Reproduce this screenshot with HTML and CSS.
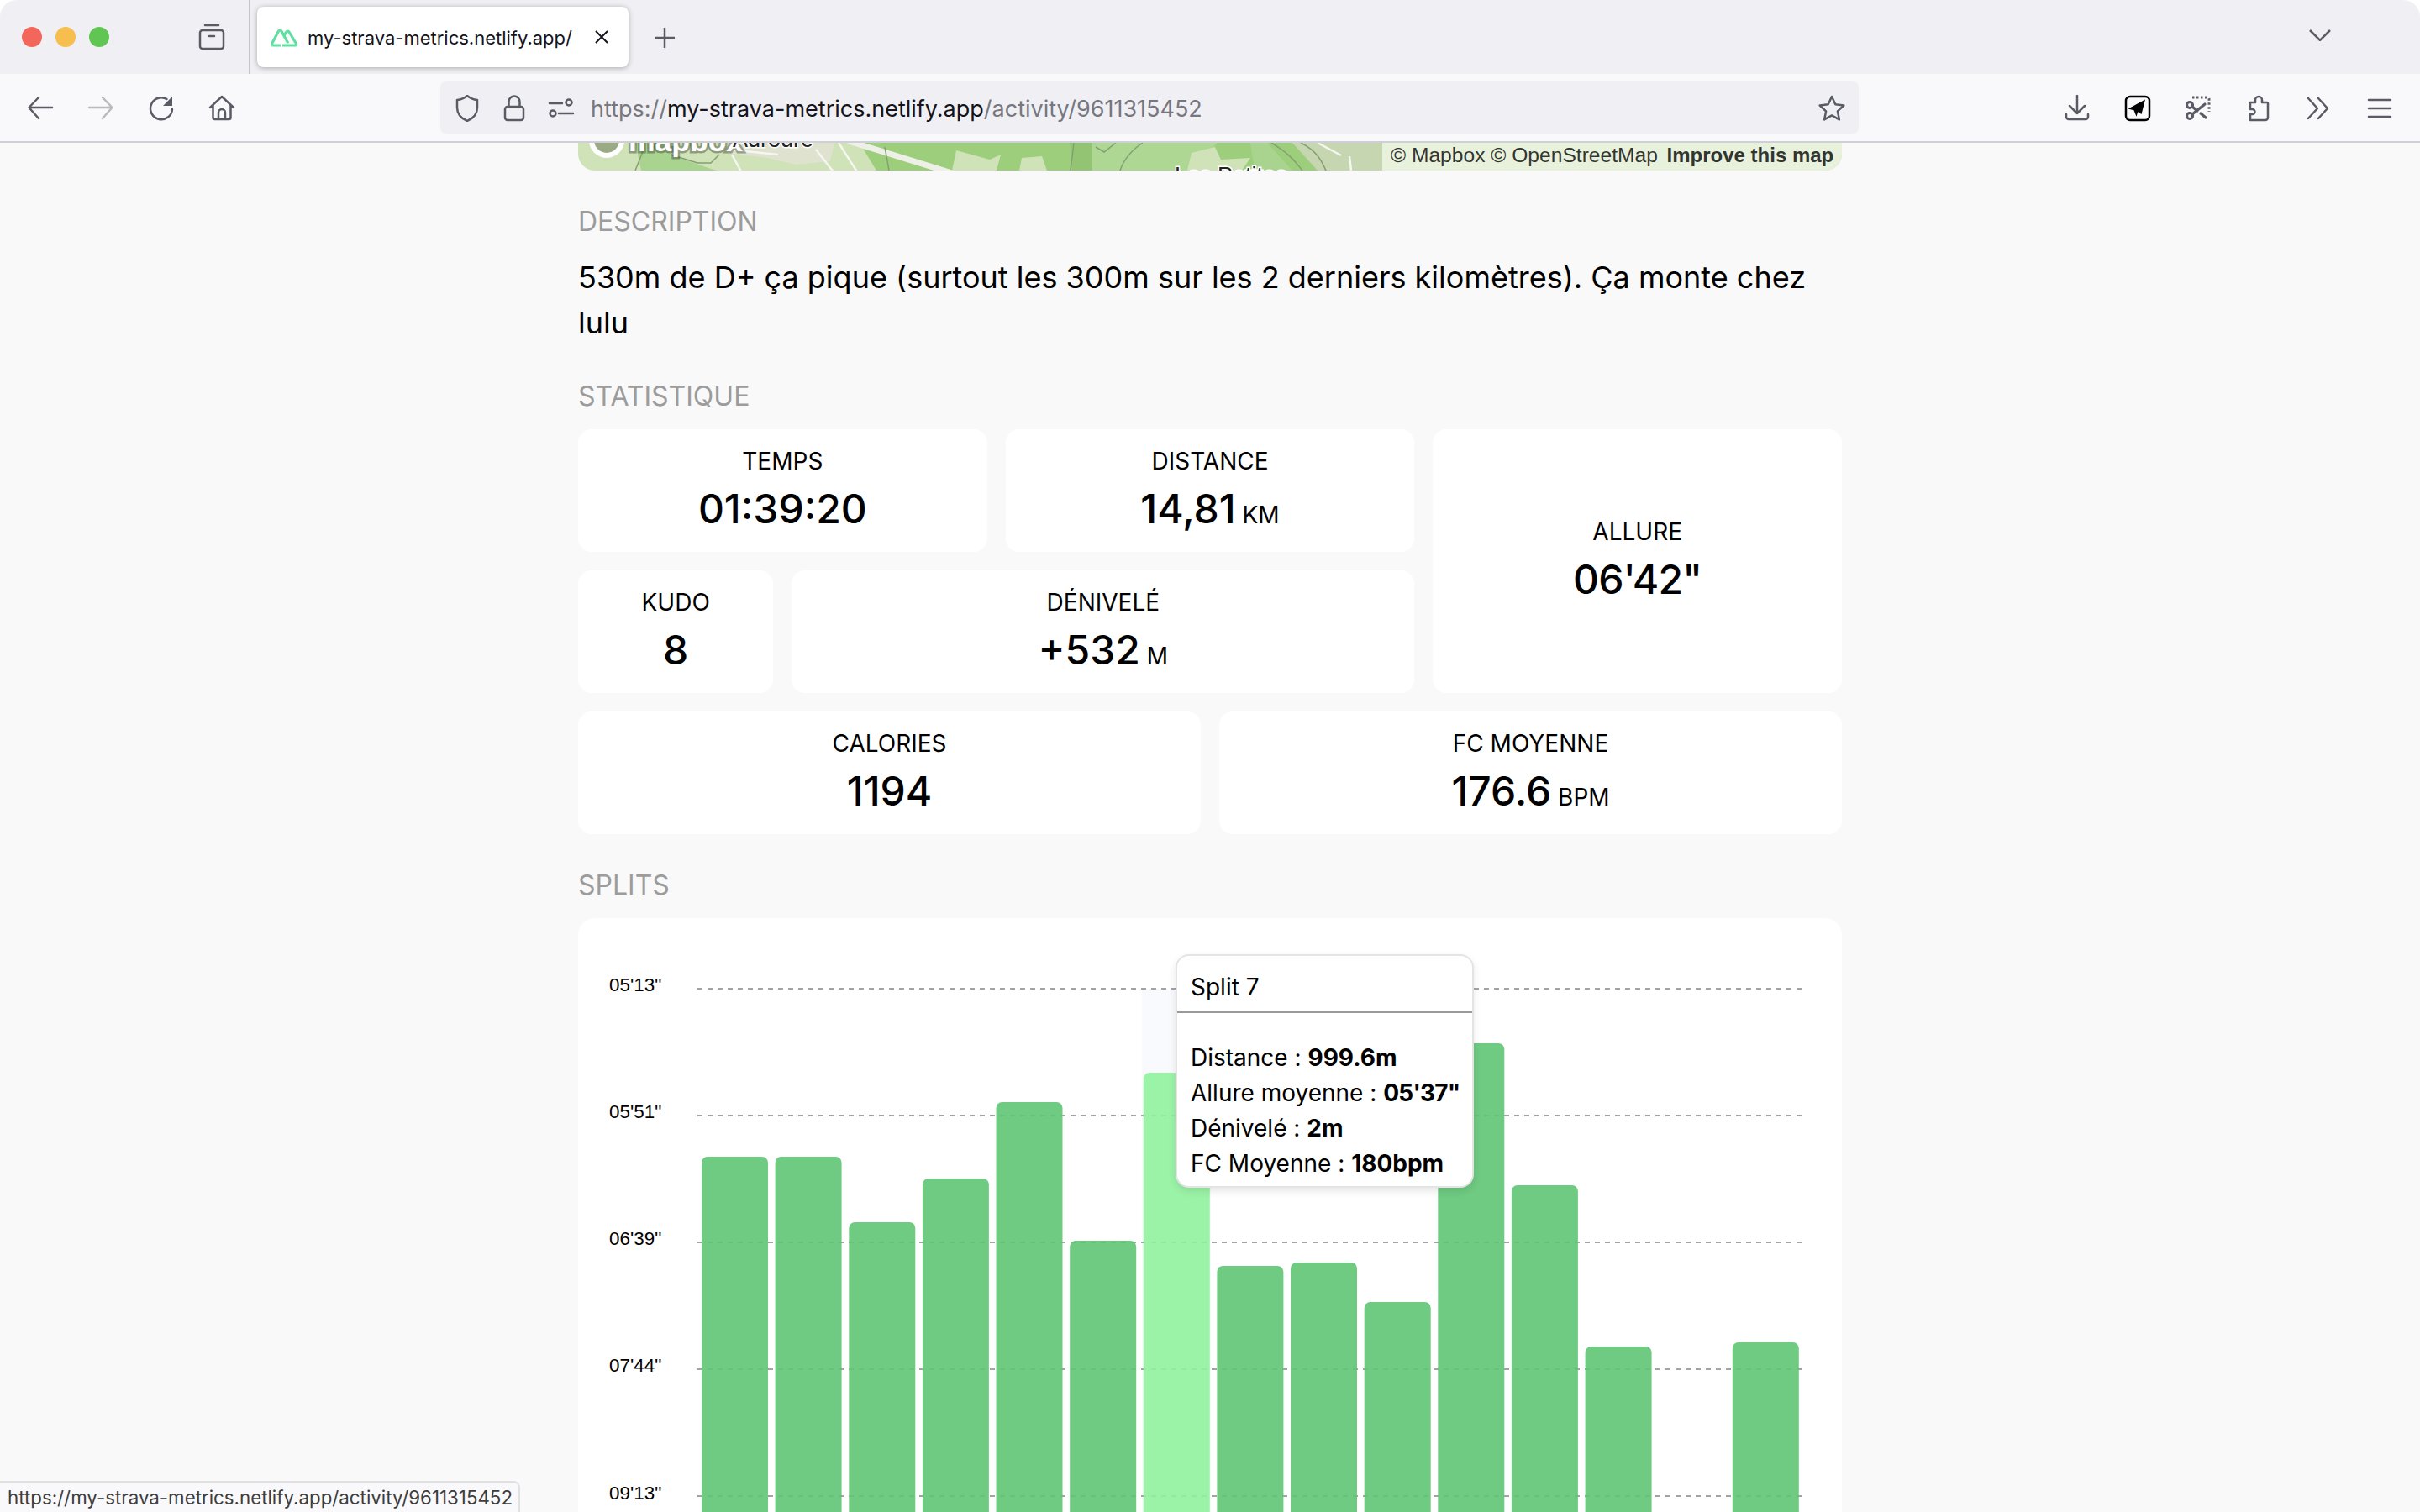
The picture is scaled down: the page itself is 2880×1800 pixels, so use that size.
FILE: index.html
```html
<!DOCTYPE html>
<html lang="en">
<head>
    <meta charset="UTF-8">
    <title>my-strava-metrics.netlify.app</title>
    <link rel="stylesheet" href="styles.css">
</head>
<body>
    <div class="tabbar">
        <div class="lights">
            <span class="light red"></span>
            <span class="light yellow"></span>
            <span class="light green"></span>
        </div>
        <svg class="icon view-btn" viewBox="0 0 32 32"><path d="M8 2h16"/><rect x="2" y="8" width="28" height="22" rx="3"/><path d="M13 15h6"/></svg>
        <div class="tab">
            <svg class="favicon" viewBox="0 0 34 24"><path d="M13 22H4a1.500 1.500 0 0 1-1.300-2.200L10.500 5a2 2 0 0 1 3.400 0l8 14.500"/><path d="M17 10l3-4a1.700 1.700 0 0 1 3 0l8.500 14a1.300 1.300 0 0 1-1.200 2H15"/></svg>
            <span class="tab-title">my-strava-metrics.netlify.app/</span>
            <svg class="tab-close" viewBox="0 0 16 16"><path d="M1 1l14 14M15 1L1 15"/></svg>
        </div>
        <svg class="tab-plus" viewBox="0 0 24 24"><path d="M12 0v24M0 12h24"/></svg>
        <svg class="tab-list" viewBox="0 0 26 14"><path d="M1 1l12 12L25 1"/></svg>
    </div>

    <div class="toolbar">
        <div class="btn"><svg class="icon" viewBox="0 0 32 32"><path d="M30 15H3M14 3L2.5 15 14 28"/></svg></div>
        <div class="btn"><svg class="icon muted" viewBox="0 0 32 32"><path d="M2 15h27M18 3l11.500 12L18 28"/></svg></div>
        <div class="btn"><svg class="icon" viewBox="0 0 32 32"><path d="M22.500 5A13 13 0 1 0 29 17"/><path class="solid" d="M29 2v11H18z"/></svg></div>
        <div class="btn"><svg class="icon" viewBox="0 0 32 32"><path d="M2 15L16 2l14 13M5.500 12v15a2 2 0 0 0 2 2h17a2 2 0 0 0 2-2V12M12 29v-8a4 4 0 0 1 8 0v8"/></svg></div>

        <div class="urlbar">
            <svg class="icon" viewBox="0 0 32 32"><path d="M16 1c-3.500 3-7.500 4.500-12 5v9c0 8 5 13 12 16 7-3 12-8 12-16V6c-4.500-.5-8.500-2-12-5z"/></svg>
            <svg class="icon" viewBox="0 0 32 32"><rect x="5" y="14" width="22" height="16" rx="3"/><path d="M9.500 14V8a6.500 6.500 0 0 1 13 0v6"/></svg>
            <svg class="icon" viewBox="0 0 32 32"><path d="M2 10h15M13 22h17"/><circle cx="25" cy="9" r="3.500"/><circle cx="6" cy="22" r="3.500"/></svg>
            <div class="url"><span class="dim">https://</span>my-strava-metrics.netlify.app<span class="dim">/activity/9611315452</span></div>
            <svg class="icon star" viewBox="0 0 32 32"><path d="M16 2l4.300 9.300 10 1.200-7.400 6.900 2 10-8.900-5-8.900 5 2-10-7.400-6.900 10-1.200z"/></svg>
        </div>

        <div class="tools">
            <div class="btn"><svg class="icon" viewBox="0 0 32 32"><path d="M16 1v21M7 13l9 9 9-9M3 23v3a3 3 0 0 0 3 3h20a3 3 0 0 0 3-3v-3"/></svg></div>
            <div class="btn"><svg class="icon ext" viewBox="0 0 32 32"><rect x="2" y="2" width="28" height="28" rx="5"/><path class="solid" d="M25 5.500L4.500 16.500l7 1.800 3 7.500 1.700-5.500 4.300 2.700z"/></svg></div>
            <div class="btn"><svg class="icon heavy" viewBox="0 0 32 32"><path class="dashed" d="M9 3h18a2 2 0 0 1 2 2v15"/><circle cx="6" cy="12" r="3.500"/><circle cx="6" cy="25" r="3.500"/><path d="M9 23L24 11M9 14l6 5M19 22l6 5"/></svg></div>
            <div class="btn"><svg class="icon" viewBox="0 0 32 32"><path d="M6 30h18a3 3 0 0 0 3-3V10a1 1 0 0 0-1-1h-6V6a4 4 0 0 0-8 0v3H6v8h2.500a3 3 0 0 1 0 6H6v5a2 2 0 0 0 0 2z"/></svg></div>
            <div class="btn"><svg class="icon" viewBox="0 0 32 32"><path d="M3 4l11 12L3 28M15 4l11 12-11 12"/></svg></div>
            <div class="btn"><svg class="icon" viewBox="0 0 32 32"><path d="M3 6h26M3 16h26M3 26h26"/></svg></div>
        </div>
    </div>

    <main class="page">
        <div class="column">
            <div class="map">
                <svg class="map-art" viewBox="0 0 1504 33">
                    <rect width="1504" height="33" fill="#cfe2b8"/>
                    <path fill="#a9d48f" d="M68 0H100L112 15 155 30 165 33H75z"/>
                    <path fill="#dfe2cf" d="M180 0H305L300 22 260 26 225 18 178 12z"/>
                    <path fill="#9dce7c" d="M335 0H1000V33H355z"/>
                    <path fill="#cfe2b8" d="M450 9L490 20 503 14 498 33H445z"/>
                    <path fill="#cfe2b8" d="M528 18L552 16 558 33H525z"/>
                    <path fill="#92c474" d="M585 0H612L628 12 610 33H588z"/>
                    <path fill="#aed793" d="M612 0H760L735 33H612z"/>
                    <path fill="#cfe2b8" d="M730 12L758 5 765 20 800 18 790 33H725z"/>
                    <path fill="#a9d48f" d="M800 0H820L850 33H805z"/>
                    <path fill="#c5d6b0" d="M850 0H957V33H880z"/>
                    <path fill="#cfe2b8" d="M957 0H1504V33H957z"/>
                    <path class="road" d="M322 -2L445 36"/>
                    <path class="lane" d="M183 14L195 36M283 8L305 36M310 0L333 36M180 8L238 14M880 0L908 15M918 16L920 33"/>
                    <path class="contour" d="M78 8L68 33M110 14L142 24 158 24 168 14M365 5L370 33M590 0L586 33M616 5L626 11 640 0M645 33C650 18 660 8 672 0M825 0C850 15 855 25 862 33M860 0C880 10 885 22 890 33"/>
                    <circle class="logo-ring" cx="34" cy="-3" r="18"/>
                    <text class="map-logo" x="60" y="10">mapbox</text>
                    <text class="map-label" x="184" y="5">Adroure</text>
                    <text class="map-label" x="710" y="48">Les Petites</text>
                </svg>
                <div class="attrib"><span>© Mapbox © OpenStreetMap</span> <b>Improve this map</b></div>
            </div>

            <h2 class="section">DESCRIPTION</h2>
            <p class="desc">530m de D+ ça pique (surtout les 300m sur les 2 derniers kilomètres). Ça monte chez lulu</p>

            <h2 class="section">STATISTIQUE</h2>
            <div class="stats">
                <div class="card span-2"><div class="card-label">TEMPS</div><div class="card-value">01:39:20</div></div>
                <div class="card span-2"><div class="card-label">DISTANCE</div><div class="card-value">14,81<small> KM</small></div></div>
                <div class="card span-2 tall"><div class="card-label">ALLURE</div><div class="card-value pace">06'42"</div></div>
                <div class="card"><div class="card-label">KUDO</div><div class="card-value">8</div></div>
                <div class="card span-3"><div class="card-label">DÉNIVELÉ</div><div class="card-value">+532<small> M</small></div></div>
                <div class="card span-3"><div class="card-label">CALORIES</div><div class="card-value">1194</div></div>
                <div class="card span-3"><div class="card-label">FC MOYENNE</div><div class="card-value">176.6<small> BPM</small></div></div>
            </div>

            <h2 class="section">SPLITS</h2>
            <div class="chart">
                <svg class="chart-art" viewBox="0 0 1504 760">
                    <rect class="cursor" x="671" y="84" width="82" height="676"/>
                    <g class="grid">
                        <path d="M142 84H1457"/>
                        <path d="M142 235H1457"/>
                        <path d="M142 386H1457"/>
                        <path d="M142 537H1457"/>
                        <path d="M142 688H1457"/>
                    </g>
                    <g class="ticks">
                        <text x="37" y="87">05'13''</text>
                        <text x="37" y="238">05'51''</text>
                        <text x="37" y="389">06'39''</text>
                        <text x="37" y="540">07'44''</text>
                        <text x="37" y="692">09'13''</text>
                    </g>
                    <g class="bars">
                        <rect x="147" y="284" width="79" height="520" rx="7"/>
                        <rect x="234.600" y="284" width="79" height="520" rx="7"/>
                        <rect x="322.300" y="362" width="79" height="440" rx="7"/>
                        <rect x="409.900" y="310" width="79" height="490" rx="7"/>
                        <rect x="497.500" y="219" width="79" height="580" rx="7"/>
                        <rect x="585.200" y="384" width="79" height="420" rx="7"/>
                        <rect class="active" x="672.800" y="184" width="79" height="620" rx="7"/>
                        <rect x="760.400" y="414" width="79" height="390" rx="7"/>
                        <rect x="848" y="410" width="79" height="390" rx="7"/>
                        <rect x="935.700" y="457" width="79" height="340" rx="7"/>
                        <rect x="1023.300" y="149" width="79" height="650" rx="7"/>
                        <rect x="1110.900" y="318" width="79" height="480" rx="7"/>
                        <rect x="1198.600" y="510" width="79" height="290" rx="7"/>
                        <rect x="1373.800" y="505" width="79" height="295" rx="7"/>
                    </g>
                </svg>
                <div class="tooltip">
                    <div class="tooltip-title">Split 7</div>
                    <div class="tooltip-body">
                        <div>Distance : <b>999.6m</b></div>
                        <div>Allure moyenne : <b class="pace">05'37"</b></div>
                        <div>Dénivelé : <b>2m</b></div>
                        <div>FC Moyenne : <b>180bpm</b></div>
                    </div>
                </div>
            </div>
        </div>
    </main>

    <div class="status">https://my-strava-metrics.netlify.app/activity/9611315452</div>
</body>
</html>
```

FILE: styles.css
```css
* {
    box-sizing: border-box;
}

html, body {
    margin: 0;
    height: 100%;
}

body {
    display: flex;
    flex-direction: column;
    overflow: hidden;
    background: #fff;
    color: #000;
    font-family: 'Inter', sans-serif;
}

/* browser chrome */
.tabbar {
    flex: none;
    display: flex;
    align-items: center;
    height: 88px;
    padding-left: 26px;
    background: #f0f0f4;
    border-radius: 20px 20px 0 0;
}

.lights {
    display: flex;
    gap: 16px;
}

.light {
    width: 24px;
    height: 24px;
    border-radius: 50%;
}

.red { background: #f2665c; }
.yellow { background: #f6bd4f; }
.green { background: #61c554; }

.icon {
    width: 32px;
    height: 32px;
    fill: none;
    stroke: #5b5b66;
    stroke-width: 2.5;
    stroke-linecap: round;
    stroke-linejoin: round;
}

.icon .solid {
    fill: #5b5b66;
    stroke: none;
}

.icon .dashed {
    stroke-dasharray: 2.5 2.5;
    stroke-linecap: butt;
    stroke-width: 3;
}

.icon.muted {
    stroke: #b9b9c0;
}

.icon.ext {
    stroke: #000;
}

.icon.ext .solid {
    fill: #000;
}

.icon.heavy {
    stroke-width: 3.2;
}

.view-btn {
    margin-left: 106px;
}

.tab {
    display: flex;
    align-items: center;
    width: 442px;
    height: 72px;
    margin-left: 38px;
    padding-left: 15px;
    background: #fff;
    border-radius: 8px;
    box-shadow: 0 1px 6px rgba(0, 0, 0, 0.3);
    position: relative;
}

.tab::before {
    content: '';
    position: absolute;
    left: -10px;
    top: -8px;
    width: 2px;
    height: 88px;
    background: #c6c6ca;
}

.favicon {
    width: 34px;
    height: 24px;
    fill: none;
    stroke: #5fe0a0;
    stroke-width: 3.2;
    stroke-linejoin: round;
}

.tab-title {
    margin-left: 11px;
    padding-top: 2px;
    width: 315px;
    font-size: 22px;
    color: #15141a;
    white-space: nowrap;
}

.tab-close {
    width: 16px;
    height: 16px;
    margin-left: 27px;
    fill: none;
    stroke: #15141a;
    stroke-width: 2;
}

.tab-plus {
    width: 24px;
    height: 24px;
    margin-left: 31px;
    margin-top: 2px;
    fill: none;
    stroke: #5b5b66;
    stroke-width: 2.5;
}

.tab-list {
    width: 26px;
    height: 14px;
    margin-left: auto;
    margin-right: 106px;
    margin-bottom: 4px;
    fill: none;
    stroke: #5b5b66;
    stroke-width: 2.5;
}

.toolbar {
    flex: none;
    display: flex;
    align-items: center;
    height: 82px;
    padding: 0 12px;
    background: #f9f9fb;
    border-bottom: 2px solid #cfcfd8;
}

.btn {
    display: flex;
    align-items: center;
    justify-content: center;
    width: 72px;
    height: 64px;
    padding-top: 2px;
}

.urlbar {
    display: flex;
    align-items: center;
    width: 1688px;
    height: 64px;
    margin-left: 224px;
    padding: 2px 16px 0;
    background: #f0f0f4;
    border-radius: 8px;
    gap: 24px;
}

.url {
    flex: 1;
    margin-left: -5px;
    font-size: 27px;
    color: #15141a;
    white-space: nowrap;
}

.dim {
    color: #77777f;
}

.tools {
    display: flex;
    margin-left: auto;
}

/* page */
.page {
    flex: 1;
    min-height: 0;
    overflow: hidden;
    background: #f9f9f9;
}

.column {
    width: 1504px;
    margin: 0 auto;
}

.map {
    position: relative;
    height: 33px;
    overflow: hidden;
    border-radius: 0 0 20px 20px;
}

.map-art {
    display: block;
    width: 1504px;
    height: 33px;
}

.road {
    stroke: #eef0e8;
    stroke-width: 7;
    fill: none;
}

.lane {
    stroke: #f5f6f0;
    stroke-width: 2.500;
    fill: none;
}

.contour {
    stroke: #84a071;
    stroke-width: 1.500;
    fill: none;
}

.map-label {
    font-family: 'Liberation Sans', sans-serif;
    font-size: 27px;
    fill: #222;
    stroke: #fff;
    stroke-width: 3px;
    paint-order: stroke;
}

.map-logo {
    font-family: 'Liberation Sans', sans-serif;
    font-weight: bold;
    font-size: 35.500px;
    fill: #fff;
    stroke: rgba(60, 70, 50, 0.45);
    stroke-width: 5px;
    paint-order: stroke;
}

.logo-ring {
    fill: #9aaa85;
    stroke: #fff;
    stroke-width: 6;
}

.attrib {
    position: absolute;
    top: 0;
    right: 0;
    width: 547px;
    height: 33px;
    padding: 0 10px;
    text-align: right;
    background: rgba(255, 255, 255, 0.5);
    font-family: 'Liberation Sans', sans-serif;
    font-size: 24px;
    line-height: 29px;
    color: rgba(0, 0, 0, 0.8);
    white-space: nowrap;
}

.attrib span {
    font-size: 24.600px;
}

.attrib b {
    margin-left: 4px;
}

.section {
    margin: 36px 0 14px;
    font-size: 32px;
    font-weight: 400;
    line-height: 50px;
    color: #9c9c9c;
}

.desc {
    margin: 0;
    font-size: 36px;
    line-height: 54px;
}

.stats {
    display: grid;
    grid-template-columns: repeat(6, 1fr);
    grid-auto-rows: 146px;
    gap: 22px;
}

.card {
    display: flex;
    flex-direction: column;
    align-items: center;
    justify-content: center;
    background: #fff;
    border-radius: 16px;
}

.span-2 { grid-column: span 2; }
.span-3 { grid-column: span 3; }
.tall { grid-row: span 2; }

.card-label {
    font-size: 28px;
    line-height: 44px;
}

.card-value {
    font-size: 48px;
    font-weight: 500;
    line-height: 70px;
}

.card-value small {
    font-size: 28px;
    font-weight: 400;
    line-height: 0;
}

.pace {
    letter-spacing: -0.8px;
}

.chart {
    position: relative;
    background: #fff;
    border-radius: 20px;
}

.chart-art {
    display: block;
    width: 1504px;
    height: 760px;
}

.cursor {
    fill: #f8fafd;
}

.grid path {
    stroke: #a3a3a3;
    stroke-width: 2;
    stroke-dasharray: 6 6;
}

.ticks text {
    font-family: 'Liberation Sans', sans-serif;
    font-size: 22.400px;
    fill: #000;
}

.bars rect {
    fill: #5fc474;
    fill-opacity: 0.9;
}

.bars rect.active {
    fill: #90f29d;
}

.tooltip {
    position: absolute;
    left: 711px;
    top: 43px;
    background: #fff;
    border: 2px solid #e4e4e4;
    border-radius: 16px;
    box-shadow: 0 4px 10px rgba(0, 0, 0, 0.1);
    font-size: 28px;
    line-height: 42px;
}

.tooltip-title {
    padding: 16px 16px 8px;
    border-bottom: 2px solid #9a9a9a;
}

.tooltip-body {
    padding: 32px 14px 6px 16px;
    white-space: nowrap;
}

/* link preview */
.status {
    position: absolute;
    left: 0;
    bottom: 0;
    width: 619px;
    height: 37px;
    padding-left: 9px;
    background: #f9f9fb;
    border: 2px solid #e0e0e0;
    border-width: 2px 2px 0 0;
    border-top-right-radius: 8px;
    font-size: 22.300px;
    line-height: 35px;
    color: #3d3d3d;
    white-space: nowrap;
}
```
